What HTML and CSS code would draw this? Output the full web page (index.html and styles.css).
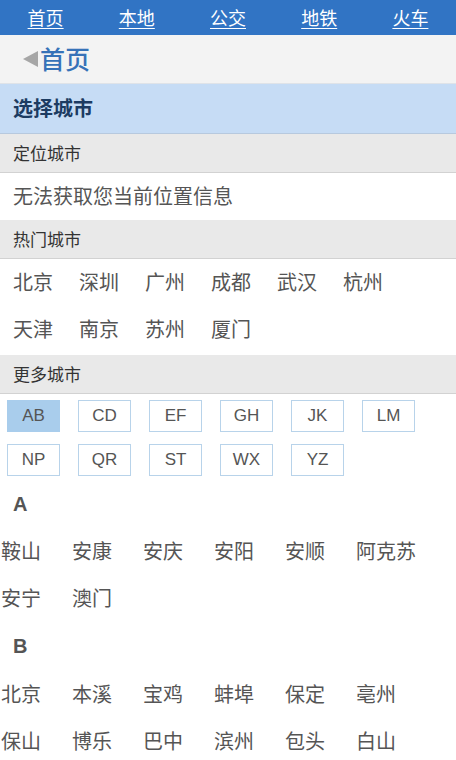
FILE: index.html
```html
<!DOCTYPE html>
<html lang="zh-CN">
<head>
<meta charset="utf-8">
<title>选择城市</title>
<link rel="stylesheet" href="styles.css">
</head>
<body>
<nav class="tabs">
  <a class="tab" href="#">首页</a>
  <a class="tab" href="#">本地</a>
  <a class="tab" href="#">公交</a>
  <a class="tab" href="#">地铁</a>
  <a class="tab" href="#">火车</a>
</nav>
<div class="titlebar"><span class="back"></span><span class="title">首页</span></div>
<div class="page-title">选择城市</div>

<div class="group-header">定位城市</div>
<div class="locate">无法获取您当前位置信息</div>

<div class="group-header">热门城市</div>
<div class="hot">
  <span>北京</span><span>深圳</span><span>广州</span><span>成都</span><span>武汉</span><span>杭州</span>
  <span>天津</span><span>南京</span><span>苏州</span><span>厦门</span>
</div>

<div class="group-header">更多城市</div>
<div class="letters">
  <span class="letter active">AB</span><span class="letter">CD</span><span class="letter">EF</span><span class="letter">GH</span><span class="letter">JK</span><span class="letter">LM</span>
  <span class="letter">NP</span><span class="letter">QR</span><span class="letter">ST</span><span class="letter">WX</span><span class="letter">YZ</span>
</div>

<div class="index-head first">A</div>
<div class="cities">
  <span>鞍山</span><span>安康</span><span>安庆</span><span>安阳</span><span>安顺</span><span>阿克苏</span>
  <span>安宁</span><span>澳门</span>
</div>
<div class="index-head second">B</div>
<div class="cities">
  <span>北京</span><span>本溪</span><span>宝鸡</span><span>蚌埠</span><span>保定</span><span>亳州</span>
  <span>保山</span><span>博乐</span><span>巴中</span><span>滨州</span><span>包头</span><span>白山</span>
</div>
</body>
</html>
```
FILE: styles.css
```css
html, body {
  margin: 0;
  padding: 0;
  background: #ffffff;
  font-family: "Noto Sans CJK SC", "Liberation Sans", sans-serif;
  overflow: hidden;
}

.tabs {
  display: flex;
  height: 35px;
  background: #3174c4;
}
.tab {
  flex: 1;
  text-align: center;
  line-height: 35px;
  color: #ffffff;
  font-size: 18px;
  text-decoration: underline;
  text-underline-offset: 3px;
}

.titlebar {
  display: flex;
  align-items: center;
  height: 48px;
  padding-left: 23px;
  background: #f3f3f3;
  border-bottom: 1px solid #dfe3e8;
}
.back {
  width: 0;
  height: 0;
  border-top: 8px solid transparent;
  border-bottom: 8px solid transparent;
  border-right: 15px solid #a6a6a6;
  margin-right: 2px;
}
.title {
  font-size: 25px;
  font-weight: 500;
  color: #3672b8;
  line-height: 1;
  margin-top: -2px;
}

.page-title {
  height: 49px;
  line-height: 47px;
  padding-left: 13px;
  background: #c6dcf5;
  border-bottom: 1px solid #b7c9de;
  color: #1c3b62;
  font-size: 20px;
  font-weight: bold;
}

.group-header {
  height: 38px;
  line-height: 37px;
  padding-left: 13px;
  background: #e9e9e9;
  border-bottom: 1px solid #d2d2d2;
  color: #333333;
  font-size: 17px;
}

.locate {
  height: 47px;
  line-height: 46px;
  padding-left: 13px;
  color: #555555;
  font-size: 20px;
}

.hot {
  display: grid;
  grid-template-columns: repeat(6, 66px);
  grid-auto-rows: 47px;
  padding: 0 0 2px 13px;
  color: #555555;
  font-size: 20px;
  line-height: 46px;
}

.letters {
  display: grid;
  grid-template-columns: repeat(6, 53px);
  column-gap: 18px;
  row-gap: 12px;
  padding: 6px 0 0 7px;
}
.letter {
  box-sizing: border-box;
  height: 32px;
  line-height: 30px;
  border: 1px solid #b8d3ea;
  text-align: center;
  font-family: "Liberation Sans", sans-serif;
  font-size: 17px;
  color: #555555;
  background: #ffffff;
}
.letter.active {
  background: #a9cdec;
  border-color: #a9cdec;
}

.index-head {
  height: 48px;
  line-height: 48px;
  padding-left: 13px;
  font-family: "Liberation Sans", sans-serif;
  font-weight: bold;
  font-size: 20px;
  color: #555555;
}
.index-head.first {
  margin-top: 4px;
}
.index-head.second {
  height: 49px;
}

.cities {
  display: grid;
  grid-template-columns: repeat(6, 71px);
  grid-auto-rows: 47px;
  padding-left: 1px;
  color: #555555;
  font-size: 20px;
  line-height: 46px;
}
```
